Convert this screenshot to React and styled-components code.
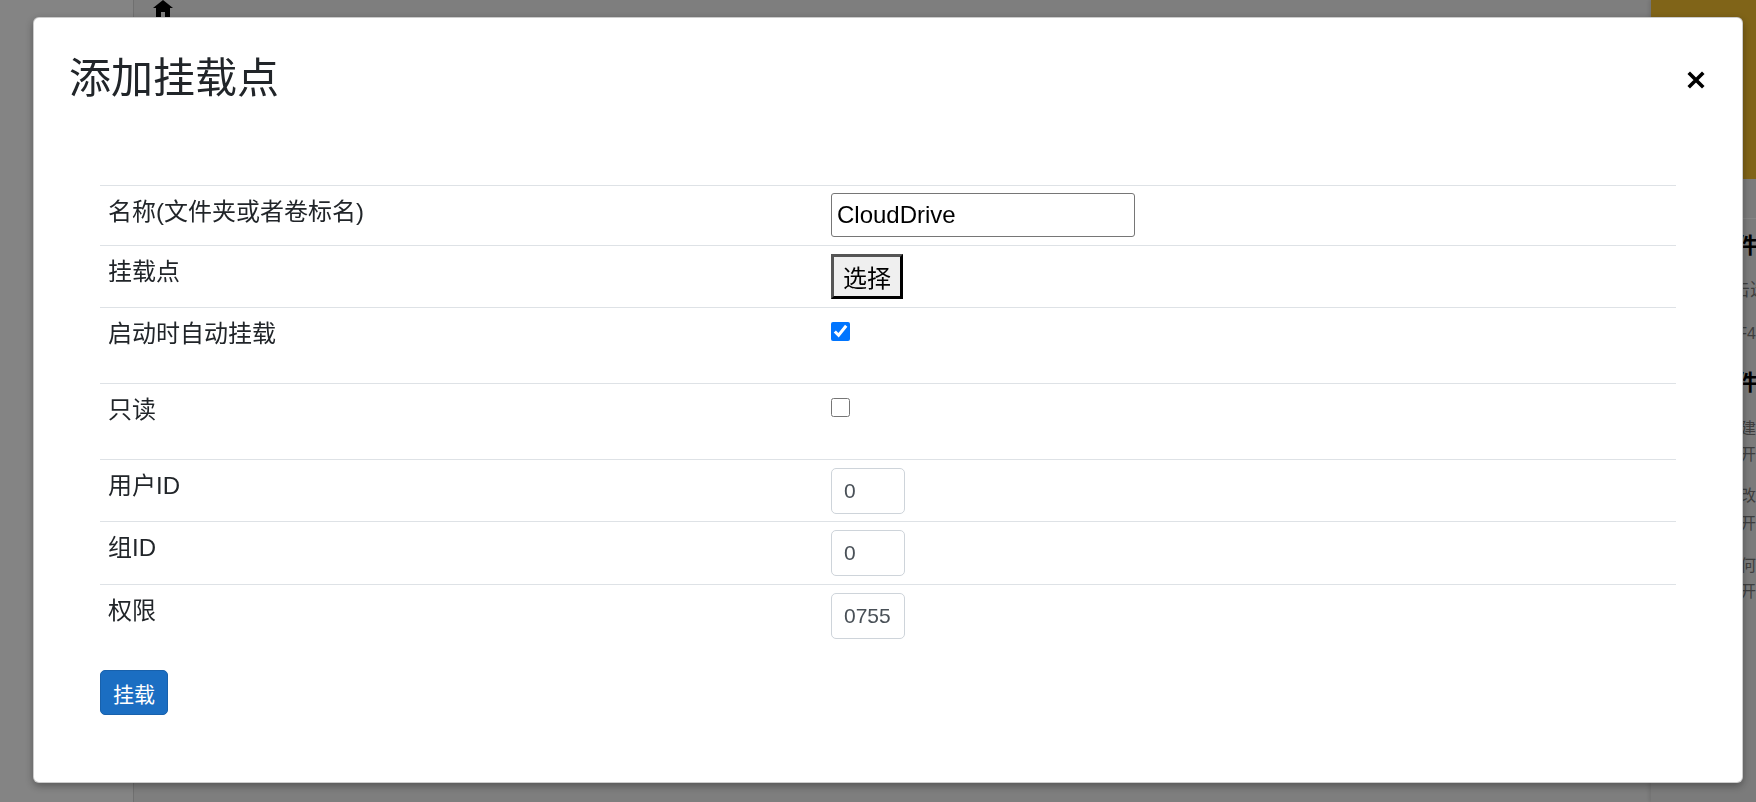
import styled, { createGlobalStyle } from 'styled-components';

const GlobalStyle = createGlobalStyle`
  html, body {
    margin: 0;
    padding: 0;
    height: 100%;
    overflow: hidden;
  }
  body {
    font-family: "Liberation Sans", "Noto Sans CJK SC", sans-serif;
    color: #212529;
    background: #f2f2f2;
  }
  #root {
    height: 100%;
  }
`;

const Page = styled.div`
  display: flex;
  height: 100vh;
  width: 100%;
`;

const Sidebar = styled.aside`
  flex: none;
  width: 133px;
  background: #fefefe;
  border-right: 1px solid #d6d6d6;
  box-shadow: 2px 0 5px rgba(0, 0, 0, 0.12);
`;

const Main = styled.main`
  flex: 1;
  background: #f2f2f2;
  padding-left: 19px;
`;

const HomeIcon = styled.svg`
  display: block;
  width: 20px;
  height: 20px;
`;

const RightPanel = styled.aside`
  flex: none;
  width: 105px;
  display: flex;
  flex-direction: column;
  background: #ececec;
  overflow: hidden;
  box-shadow: -2px 0 4px rgba(0, 0, 0, 0.1);
`;

const GoldBar = styled.div`
  height: 179px;
  background: #f6c02e;
`;

const PanelNav = styled.div`
  height: 39px;
  border-bottom: 1px solid #ffffff;
`;

const Note = styled.div`
  text-align: right;
  white-space: nowrap;
  font-size: ${(p) => p.$size}px;
  line-height: ${(p) => p.$lh}px;
  font-weight: ${(p) => (p.$bold ? 700 : 400)};
  color: ${(p) => (p.$bold ? '#000' : '#7a7a7a')};
  margin-top: ${(p) => p.$mt || 0}px;
  margin-right: ${(p) => -(p.$shift || 0)}px;
`;

const Backdrop = styled.div`
  position: fixed;
  inset: 0;
  background: rgba(0, 0, 0, 0.48);
`;

const Dialog = styled.div`
  position: fixed;
  top: 17px;
  left: 33px;
  width: 1710px;
  box-sizing: border-box;
  background: #fff;
  border: 1px solid rgba(0, 0, 0, 0.2);
  border-radius: 6px;
  box-shadow: 0 3px 9px rgba(0, 0, 0, 0.35);
`;

const Header = styled.div`
  display: flex;
  align-items: center;
  justify-content: space-between;
  padding: 36px 37px 0 35px;
`;

const Title = styled.h4`
  margin: 0;
  font-size: 42px;
  line-height: 50px;
  font-weight: 400;
  color: #212529;
`;

const Close = styled.button`
  display: flex;
  width: 18px;
  height: 18px;
  padding: 0;
  margin-top: 2px;
  border: 0;
  background: none;
  cursor: pointer;
`;

const Body = styled.div`
  padding: 81px 66px 67px;
`;

const Form = styled.div`
  display: flex;
  flex-direction: column;
`;

const Row = styled.div`
  display: grid;
  grid-template-columns: 723px 1fr;
  height: ${(p) => p.$h}px;
  box-sizing: border-box;
  border-top: 1px solid #dee2e6;
`;

const Label = styled.div`
  padding: 8px 8px 0;
  font-size: 24px;
  line-height: 36px;
  color: #212529;
`;

const Value = styled.div`
  padding: 7px 8px 0;
`;

const TextInput = styled.input`
  display: block;
  width: 304px;
  height: 44px;
  box-sizing: border-box;
  padding: 0 5px;
  border: 1px solid #767676;
  border-radius: 3px;
  font: 24px "Liberation Sans", "Noto Sans CJK SC", sans-serif;
  color: #000;
  outline: none;
`;

const PickButton = styled.button`
  display: block;
  width: 72px;
  height: 45px;
  box-sizing: border-box;
  padding: 0;
  margin-top: 1px;
  border: 3px solid;
  border-color: #555 #000 #000 #555;
  background: #efefef;
  font: 24px "Liberation Sans", "Noto Sans CJK SC", sans-serif;
  color: #000;
`;

const Check = styled.input`
  display: block;
  width: 19px;
  height: 19px;
  margin: 7px 0 0;
  accent-color: #0075ff;
`;

const SmallInput = styled.input`
  display: block;
  width: 74px;
  height: 46px;
  box-sizing: border-box;
  padding: 0 12px;
  margin-top: 1px;
  border: 1px solid #ced4da;
  border-radius: 5px;
  font: 21px "Liberation Sans", "Noto Sans CJK SC", sans-serif;
  color: #495057;
  outline: none;
`;

const Submit = styled.button`
  margin-top: 24px;
  height: 45px;
  padding: 0 12px;
  border: 1px solid #1861ac;
  border-radius: 5px;
  background: #1b6ec2;
  color: #fff;
  font: 21px "Liberation Sans", "Noto Sans CJK SC", sans-serif;
`;

export default function App() {
  return (
    <>
      <GlobalStyle />
      <Page>
        <Sidebar />
        <Main>
          <HomeIcon viewBox="0 0 20 20">
            <path
              fillRule="evenodd"
              fill="#000"
              d="M10 0 L20 8 L17 8 L17 20 L3 20 L3 8 L0 8 Z M8 12 L12 12 L12 20 L8 20 Z"
            />
          </HomeIcon>
        </Main>
        <RightPanel>
          <GoldBar />
          <PanelNav />
          <Note $size={22} $lh={30} $mt={12} $bold $shift={2}>挂载文件</Note>
          <Note $size={18} $lh={24} $mt={17} $shift={30}>点击选择</Note>
          <Note $size={16} $lh={24} $mt={20}>快捷键 F4</Note>
          <Note $size={22} $lh={30} $mt={22} $bold $shift={2}>上传文件</Note>
          <Note $size={16} $lh={26} $mt={18}>新建</Note>
          <Note $size={16} $lh={26}>打开</Note>
          <Note $size={16} $lh={28} $mt={14}>修改</Note>
          <Note $size={16} $lh={28}>打开</Note>
          <Note $size={16} $lh={26} $mt={15}>如何</Note>
          <Note $size={16} $lh={26}>打开</Note>
        </RightPanel>
      </Page>

      <Backdrop />
      <Dialog>
        <Header>
          <Title>添加挂载点</Title>
          <Close aria-label="关闭">
            <svg width="18" height="18" viewBox="0 0 18 18">
              <path d="M3 3 L15 15 M15 3 L3 15" stroke="#000" strokeWidth="3.6" strokeLinecap="square" />
            </svg>
          </Close>
        </Header>
        <Body>
          <Form>
            <Row $h={60}>
              <Label>名称(文件夹或者卷标名)</Label>
              <Value>
                <TextInput type="text" defaultValue="CloudDrive" />
              </Value>
            </Row>
            <Row $h={62}>
              <Label>挂载点</Label>
              <Value>
                <PickButton>选择</PickButton>
              </Value>
            </Row>
            <Row $h={76}>
              <Label>启动时自动挂载</Label>
              <Value>
                <Check type="checkbox" defaultChecked />
              </Value>
            </Row>
            <Row $h={76}>
              <Label>只读</Label>
              <Value>
                <Check type="checkbox" />
              </Value>
            </Row>
            <Row $h={62}>
              <Label>用户ID</Label>
              <Value>
                <SmallInput type="text" defaultValue="0" />
              </Value>
            </Row>
            <Row $h={63}>
              <Label>组ID</Label>
              <Value>
                <SmallInput type="text" defaultValue="0" />
              </Value>
            </Row>
            <Row $h={62}>
              <Label>权限</Label>
              <Value>
                <SmallInput type="text" defaultValue="0755" />
              </Value>
            </Row>
          </Form>
          <Submit>挂载</Submit>
        </Body>
      </Dialog>
    </>
  );
}
